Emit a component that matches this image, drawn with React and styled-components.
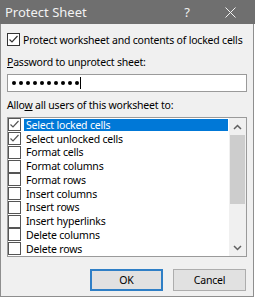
import React from 'react';
import styled, { createGlobalStyle } from 'styled-components';

const Global = createGlobalStyle`
  html, body { margin: 0; padding: 0; background: #ffffff; }
  body { font-family: "Noto Sans", "Open Sans", sans-serif; }
  * { box-sizing: border-box; }
`;

const Window = styled.div`
  width: 255px;
  height: 300px;
  display: flex;
  flex-direction: column;
`;

const TitleBar = styled.div`
  height: 24px;
  background: #6f6f6f;
  color: #f2f2f2;
  display: flex;
  align-items: center;
  padding-left: 5px;
  font-size: 13px;
`;

const Title = styled.span`
  flex: 1;
`;

const TitleButton = styled.span`
  width: ${p => p.$w}px;
  height: 24px;
  display: flex;
  align-items: center;
  justify-content: center;
  font-size: 13px;
`;

const Body = styled.div`
  width: 254px;
  height: 273px;
  background: #f0f0f0;
  border: 1px solid #8e8e8e;
  border-top: none;
  padding: 9px 6px 0 6px;
  display: flex;
  flex-direction: column;
  font-size: 10.5px;
  letter-spacing: -0.2px;
  color: #000;
`;

const CheckRow = styled.div`
  display: flex;
  align-items: center;
  height: 13px;
  gap: 3px;
`;

const Box = styled.span`
  width: 13px;
  height: 13px;
  flex: none;
  border: 1px solid ${p => p.$dark ? '#333333' : '#555555'};
  background: #ffffff;
  display: flex;
  align-items: center;
  justify-content: center;
`;

const Label = styled.div`
  height: 14px;
  line-height: 14px;
  margin-top: ${p => p.$mt}px;
`;

const Underline = styled.span`
  text-decoration: underline;
  text-underline-offset: 1px;
`;

const Input = styled.div`
  margin-top: 5px;
  height: 18px;
  background: #ffffff;
  border: 1px solid #9a9a9a;
  display: flex;
  align-items: center;
  padding-left: 2px;
`;

const Dot = styled.span`
  width: 7px;
  display: flex;
  justify-content: center;
  align-items: center;
  &::before {
    content: '';
    width: 4px;
    height: 4px;
    border-radius: 50%;
    background: #000;
  }
`;

const Caret = styled.span`
  width: 1px;
  height: 12px;
  background: #000;
`;

const ListBox = styled.div`
  margin-top: 5px;
  height: 140px;
  background: #ffffff;
  border: 1px solid #9a9a9a;
  display: flex;
`;

const Items = styled.div`
  flex: 1;
  display: flex;
  flex-direction: column;
  overflow: hidden;
`;

const Row = styled.div`
  height: 13.75px;
  flex: none;
  display: flex;
  align-items: center;
`;

const ItemText = styled.span`
  flex: 1;
  margin-left: 3px;
  margin-right: 1px;
  height: 12px;
  line-height: 12px;
  padding-left: 2px;
  background: ${p => p.$sel ? '#0078d7' : 'transparent'};
  color: ${p => p.$sel ? '#ffffff' : '#000000'};
`;

const ScrollBar = styled.div`
  width: 17px;
  background: #f0f0f0;
  display: flex;
  flex-direction: column;
`;

const Arrow = styled.div`
  height: 17px;
  display: flex;
  align-items: center;
  justify-content: center;
`;

const Thumb = styled.div`
  height: 69px;
  margin: 0 1px;
  background: #cdcdcd;
`;

const Track = styled.div`
  flex: 1;
`;

const Buttons = styled.div`
  margin-top: 12px;
  margin-right: 1px;
  display: flex;
  justify-content: flex-end;
  gap: 10px;
`;

const Button = styled.div`
  width: 73px;
  height: 22px;
  background: #e1e1e1;
  border: ${p => p.$default ? '2px solid #2f7fc6' : '1px solid #adadad'};
  display: flex;
  align-items: center;
  justify-content: center;
`;

const Check = ({ color }) => (
  <svg width="11" height="11" viewBox="0 0 11 11">
    <polyline points="1.5,5.5 4,8 9.5,2" fill="none" stroke={color} strokeWidth="1.2" />
  </svg>
);

const items = [
  { label: 'Select locked cells', checked: true, sel: true },
  { label: 'Select unlocked cells', checked: true },
  { label: 'Format cells' },
  { label: 'Format columns' },
  { label: 'Format rows' },
  { label: 'Insert columns' },
  { label: 'Insert rows' },
  { label: 'Insert hyperlinks' },
  { label: 'Delete columns' },
  { label: 'Delete rows' },
];

export default function App() {
  return (
    <>
      <Global />
      <Window>
        <TitleBar>
          <Title>Protect Sheet</Title>
          <TitleButton $w={36}>?</TitleButton>
          <TitleButton $w={50}>
            <svg width="11" height="11" viewBox="0 0 11 11">
              <path d="M0.5 0.5 L10.5 10.5 M10.5 0.5 L0.5 10.5" stroke="#f2f2f2" strokeWidth="1" />
            </svg>
          </TitleButton>
        </TitleBar>
        <Body>
          <CheckRow>
            <Box $dark><Check color="#333" /></Box>
            <span>Protect worksheet and contents of locked cells</span>
          </CheckRow>
          <Label $mt={9}><Underline>P</Underline>assword to unprotect sheet:</Label>
          <Input>
            {Array.from({ length: 10 }).map((_, i) => <Dot key={i} />)}
            <Caret />
          </Input>
          <Label $mt={6}>Allo<Underline>w</Underline> all users of this worksheet to:</Label>
          <ListBox>
            <Items>
              {items.map(it => (
                <Row key={it.label}>
                  <Box>{it.checked && <Check color="#555" />}</Box>
                  <ItemText $sel={it.sel}>{it.label}</ItemText>
                </Row>
              ))}
            </Items>
            <ScrollBar>
              <Arrow>
                <svg width="9" height="6" viewBox="0 0 9 6">
                  <polyline points="1,5 4.5,1.5 8,5" fill="none" stroke="#606060" strokeWidth="1.5" />
                </svg>
              </Arrow>
              <Thumb />
              <Track />
              <Arrow>
                <svg width="9" height="6" viewBox="0 0 9 6">
                  <polyline points="1,1 4.5,4.5 8,1" fill="none" stroke="#606060" strokeWidth="1.5" />
                </svg>
              </Arrow>
            </ScrollBar>
          </ListBox>
          <Buttons>
            <Button $default>OK</Button>
            <Button>Cancel</Button>
          </Buttons>
        </Body>
      </Window>
    </>
  );
}
